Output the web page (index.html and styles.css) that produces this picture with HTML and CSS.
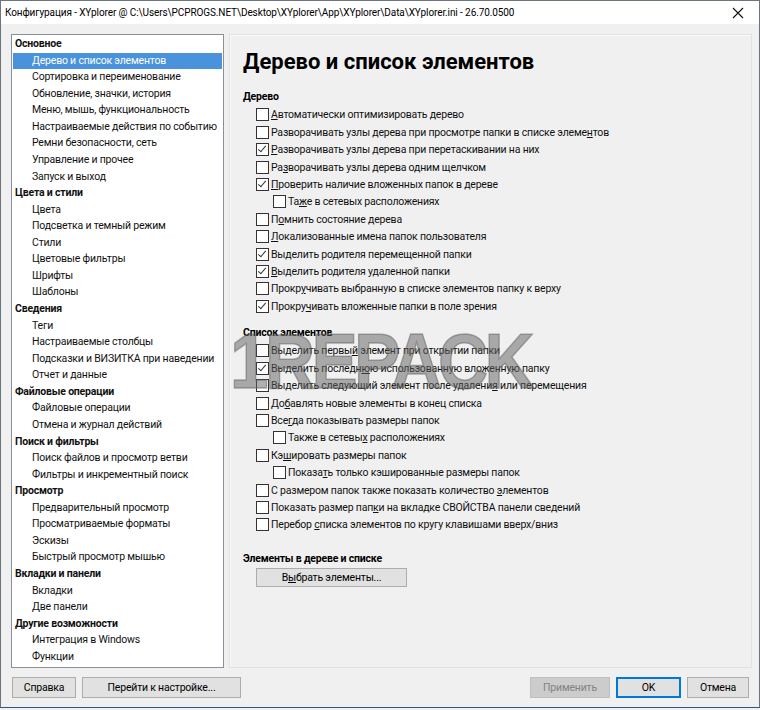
FILE: index.html
```html
<!DOCTYPE html>
<html>
<head>
    <meta charset="utf-8">
    <link rel="stylesheet" href="styles.css">
</head>
<body>
<div class="window">
    <div class="titlebar">
        <span class="title">Конфигурация - XYplorer @ C:\Users\PCPROGS.NET\Desktop\XYplorer\App\XYplorer\Data\XYplorer.ini - 26.70.0500</span>
        <svg class="close" width="12" height="12" viewBox="0 0 12 12"><path d="M1 1L11 11M11 1L1 11" stroke="#111" stroke-width="1.1" fill="none"/></svg>
    </div>
    <div class="content">
        <div class="main">
            <div class="tree">
                <div class="node head">Основное</div>
                <div class="node selected">Дерево и список элементов</div>
                <div class="node">Сортировка и переименование</div>
                <div class="node">Обновление, значки, история</div>
                <div class="node">Меню, мышь, функциональность</div>
                <div class="node">Настраиваемые действия по событию</div>
                <div class="node">Ремни безопасности, сеть</div>
                <div class="node">Управление и прочее</div>
                <div class="node">Запуск и выход</div>
                <div class="node head">Цвета и стили</div>
                <div class="node">Цвета</div>
                <div class="node">Подсветка и темный режим</div>
                <div class="node">Стили</div>
                <div class="node">Цветовые фильтры</div>
                <div class="node">Шрифты</div>
                <div class="node">Шаблоны</div>
                <div class="node head">Сведения</div>
                <div class="node">Теги</div>
                <div class="node">Настраиваемые столбцы</div>
                <div class="node">Подсказки и ВИЗИТКА при наведении</div>
                <div class="node">Отчет и данные</div>
                <div class="node head">Файловые операции</div>
                <div class="node">Файловые операции</div>
                <div class="node">Отмена и журнал действий</div>
                <div class="node head">Поиск и фильтры</div>
                <div class="node">Поиск файлов и просмотр ветви</div>
                <div class="node">Фильтры и инкрементный поиск</div>
                <div class="node head">Просмотр</div>
                <div class="node">Предварительный просмотр</div>
                <div class="node">Просматриваемые форматы</div>
                <div class="node">Эскизы</div>
                <div class="node">Быстрый просмотр мышью</div>
                <div class="node head">Вкладки и панели</div>
                <div class="node">Вкладки</div>
                <div class="node">Две панели</div>
                <div class="node head">Другие возможности</div>
                <div class="node">Интеграция в Windows</div>
                <div class="node">Функции</div>
            </div>

            <div class="page">
                <h1>Дерево и список элементов</h1>

                <div class="group-title">Дерево</div>
                <div class="check"><span class="box"></span><u>А</u>втоматически оптимизировать дерево</div>
                <div class="check"><span class="box"></span>Разворачивать узлы дерева при просмотре папки в списке элеме<u>н</u>тов</div>
                <div class="check"><span class="box on"></span><u>Р</u>азворачивать узлы дерева при перетаскивании на них</div>
                <div class="check"><span class="box"></span>Ра<u>з</u>ворачивать узлы дерева одним щелчком</div>
                <div class="check"><span class="box on"></span><u>П</u>роверить наличие вложенных папок в дереве</div>
                <div class="check sub"><span class="box"></span>Та<u>ж</u>е в сетевых расположениях</div>
                <div class="check"><span class="box"></span>П<u>о</u>мнить состояние дерева</div>
                <div class="check"><span class="box"></span><u>Л</u>окализованные имена папок пользователя</div>
                <div class="check"><span class="box on"></span>Вы<u>д</u>елить родителя перемещенной папки</div>
                <div class="check"><span class="box on"></span><u>В</u>ыделить родителя удаленной папки</div>
                <div class="check"><span class="box"></span>Прокр<u>у</u>чивать выбранную в списке элементов папку к верху</div>
                <div class="check"><span class="box on"></span>Прокру<u>ч</u>ивать вложенные папки в поле зрения</div>

                <div class="group-title gap">Список элементов</div>
                <div class="check"><span class="box"></span>Выделить первы<u>й</u> элемент при открытии папки</div>
                <div class="check"><span class="box on"></span>Выделить последн<u>ю</u>ю использованную вложенную папку</div>
                <div class="check"><span class="box"></span>Выделить следующий элемент после удалени<u>я</u> или перемещения</div>
                <div class="check"><span class="box"></span>До<u>б</u>авлять новые элементы в конец списка</div>
                <div class="check"><span class="box"></span>Все<u>г</u>да показывать размеры папок</div>
                <div class="check sub"><span class="box"></span>Также в сетевы<u>х</u> расположениях</div>
                <div class="check"><span class="box"></span>Кэ<u>ш</u>ировать размеры папок</div>
                <div class="check sub"><span class="box"></span>Показа<u>т</u>ь только кэшированные размеры папок</div>
                <div class="check"><span class="box"></span>С размером папок также показать количество <u>э</u>лементов</div>
                <div class="check"><span class="box"></span>Показать размер пап<u>к</u>и на вкладке СВОЙСТВА панели сведений</div>
                <div class="check"><span class="box"></span>Перебор <u>с</u>писка элементов по кругу клавишами вверх/вниз</div>

                <div class="group-title gap-big">Элементы в дереве и списке</div>
                <button class="btn pick">В<u>ы</u>брать элементы...</button>
            </div>
        </div>

        <div class="footer">
            <button class="btn help">Справка</button>
            <button class="btn goto">Перейти к настройке...</button>
            <span class="spacer"></span>
            <button class="btn apply" disabled>Применить</button>
            <button class="btn ok">OK</button>
            <button class="btn cancel">Отмена</button>
        </div>
    </div>
    <div class="watermark">1REPACK</div>
</div>
</body>
</html>
```

FILE: styles.css
```css
html, body {
    margin: 0;
    padding: 0;
    background: #f0f0f0;
}
body {
    font-family: Roboto, "Noto Sans", sans-serif;
    font-size: 10.5px;
    letter-spacing: -0.2px;
    color: #000;
}
.window {
    position: relative;
    width: 760px;
    height: 708px;
    box-sizing: border-box;
    border: 1px solid #6b7580;
    border-bottom-color: #2f5578;
    background: #f0f0f0;
    overflow: hidden;
}
.titlebar {
    height: 23px;
    background: #fff;
    display: flex;
    align-items: center;
    padding: 0 0 0 4px;
    font-size: 10px;
    letter-spacing: -0.1px;
}
.title {
    flex: 1;
    white-space: nowrap;
}
.close {
    margin-right: 15px;
}
.content {
    padding: 10px 0 0 10px;
}
.main {
    display: flex;
    height: 634px;
}
.tree {
    width: 213px;
    box-sizing: border-box;
    border: 1px solid #8a8f98;
    background: #fff;
    padding: 1px;
}
.node {
    height: 16.57px;
    line-height: 16.57px;
    padding-left: 19px;
    white-space: nowrap;
    color: #111;
}
.node.head {
    padding-left: 2px;
    font-weight: bold;
}
.node.selected {
    background: #4a92dc;
    color: #fff;
}
.page {
    margin-left: 5px;
    width: 523px;
    box-sizing: border-box;
    border: 1px solid #e2e2e2;
    box-shadow: inset 1px 1px 0 #fafafa;
    padding: 14px 0 0 13px;
}
h1 {
    margin: 0 0 13px 0;
    font-size: 22px;
    font-weight: bold;
    line-height: 26px;
    letter-spacing: 0;
}
.group-title {
    font-weight: bold;
    height: 17.4px;
    line-height: 17.4px;
    margin-bottom: 1px;
}
.group-title.gap {
    margin-top: 9px;
}
.group-title.gap-big {
    margin-top: 16px;
    margin-bottom: 1px;
}
.check {
    height: 17.4px;
    line-height: 17.4px;
    padding-left: 13px;
    white-space: nowrap;
    color: #111;
}
.check.sub {
    padding-left: 30px;
}
.check u {
    text-underline-offset: 1px;
}
.box {
    display: inline-block;
    vertical-align: -3px;
    width: 11px;
    height: 11px;
    border: 1px solid #333;
    background: #fff;
    margin-right: 2px;
    position: relative;
}
.box.on::after {
    content: "";
    position: absolute;
    left: 3px;
    top: 0px;
    width: 3px;
    height: 7px;
    border: solid #333;
    border-width: 0 1.3px 1.3px 0;
    transform: rotate(40deg);
}
.btn {
    font-family: inherit;
    font-size: 10.5px;
    letter-spacing: -0.2px;
    color: #000;
    background: #e1e1e1;
    border: 1px solid #adadad;
    height: 21px;
    padding: 0;
    margin: 0;
}
.pick {
    margin-left: 13px;
    width: 151px;
    height: 19px;
}
.footer {
    display: flex;
    align-items: center;
    margin-top: 9px;
    padding-right: 10px;
}
.help {
    width: 64px;
    margin-left: 1px;
}
.goto {
    width: 159px;
    margin-left: 6px;
}
.spacer {
    flex: 1;
}
.apply {
    width: 80px;
    background: #cccccc;
    border-color: #bfbfbf;
    color: #838383;
}
.ok {
    width: 65px;
    margin-left: 6px;
    border: 2px solid #0078d7;
}
.cancel {
    width: 62px;
    margin-left: 6px;
}
.watermark {
    position: absolute;
    left: 229px;
    top: 320px;
    font-family: "Liberation Sans", Arial, sans-serif;
    font-weight: 900;
    font-size: 77px;
    line-height: 80px;
    letter-spacing: -4px;
    color: rgba(95, 95, 95, 0.5);
    -webkit-text-stroke: 1.5px rgba(95, 95, 95, 0.5);
    transform: scaleX(0.9);
    transform-origin: left top;
    pointer-events: none;
}
```
